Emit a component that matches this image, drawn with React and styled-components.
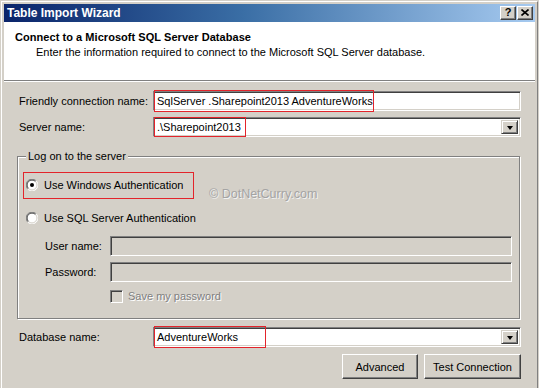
import React from 'react'
import styled, { createGlobalStyle } from 'styled-components'

const GlobalStyle = createGlobalStyle`
  html, body {
    margin: 0;
    padding: 0;
    background: #d4d0c8;
  }
  body {
    font-family: 'Liberation Sans', Arial, sans-serif;
    font-size: 11px;
    color: #000;
  }
  * {
    box-sizing: border-box;
  }
`

const Window = styled.div`
  width: 539px;
  height: 388px;
  overflow: hidden;
  background: #d4d0c8;
  border: 1px solid #d4d0c8;
  border-bottom: none;
`

const Frame = styled.div`
  height: 100%;
  display: flex;
  flex-direction: column;
  border-top: 1px solid #fff;
  border-left: 1px solid #fff;
  border-right: 1px solid #808080;
  padding: 2px 2px 0 2px;
`

const TitleBar = styled.div`
  height: 18px;
  flex: none;
  display: flex;
  align-items: center;
  justify-content: space-between;
  padding: 0 2px 0 3px;
  background: linear-gradient(to right, #0a246a 0%, #3a6ea5 45%, #a6caf0 100%);
`

const TitleText = styled.span`
  color: #fff;
  font-weight: bold;
  font-size: 12px;
  line-height: 14px;
`

const CaptionButtons = styled.div`
  display: flex;
  gap: 1px;
`

const CaptionButton = styled.div`
  width: 16px;
  height: 14px;
  display: flex;
  align-items: center;
  justify-content: center;
  background: #d4d0c8;
  border: 1px solid;
  border-color: #fff #404040 #404040 #fff;
  box-shadow: inset -1px -1px #808080;
  font-weight: bold;
  font-size: 11px;
  line-height: 11px;
  padding-bottom: 1px;
`

const Header = styled.div`
  height: 59px;
  flex: none;
  background: #fff;
  border-bottom: 1px solid #808080;
  box-shadow: 0 1px 0 #fff;
  padding: 9px 0 0 11px;
`

const HeaderTitle = styled.div`
  font-weight: bold;
  font-size: 11px;
  line-height: 13px;
  letter-spacing: 0.05px;
`

const HeaderSub = styled.div`
  margin-top: 2px;
  padding-left: 21px;
  line-height: 13px;
`

const Body = styled.div`
  flex: 1;
  display: flex;
  flex-direction: column;
  padding: 10px 14px 0 13px;
`

const FieldRow = styled.div`
  display: grid;
  grid-template-columns: ${({ $label }) => $label}px 1fr;
  align-items: center;
  margin-top: ${({ $top }) => $top || 0}px;
  padding-left: ${({ $indent }) => $indent || 2}px;
  padding-right: ${({ $right }) => $right || 0}px;
`

const Label = styled.span`
  line-height: 13px;
  white-space: nowrap;
`

const Field = styled.div`
  position: relative;
`

const sunken = `
  border: 1px solid;
  border-color: #808080 #fff #fff #808080;
  box-shadow: inset 1px 1px #404040, inset -1px -1px #d4d0c8;
`

const TextBox = styled.div`
  height: 20px;
  display: flex;
  align-items: center;
  padding: 0 3px;
  background: ${({ $disabled }) => ($disabled ? '#d4d0c8' : '#fff')};
  ${sunken}
  white-space: nowrap;
  overflow: hidden;
`

const Combo = styled.div`
  height: 20px;
  display: flex;
  align-items: stretch;
  padding: 2px;
  background: #fff;
  ${sunken}
`

const ComboText = styled.div`
  flex: 1;
  display: flex;
  align-items: center;
  padding-left: 1px;
  white-space: nowrap;
`

const DropButton = styled.div`
  width: 17px;
  display: flex;
  align-items: center;
  justify-content: center;
  background: #d4d0c8;
  border: 1px solid;
  border-color: #d4d0c8 #404040 #404040 #d4d0c8;
  box-shadow: inset 1px 1px #fff, inset -1px -1px #808080;
`

const Arrow = styled.span`
  width: 0;
  height: 0;
  border-left: 3.5px solid transparent;
  border-right: 3.5px solid transparent;
  border-top: 4px solid #000;
  margin-top: 1px;
`

const Mark = styled.div`
  position: absolute;
  left: ${({ $x }) => $x}px;
  top: ${({ $y }) => $y}px;
  width: ${({ $w }) => $w}px;
  height: ${({ $h }) => $h}px;
  border: 1px solid #e3242b;
  pointer-events: none;
`

const GroupBox = styled.div`
  position: relative;
  display: flex;
  flex-direction: column;
  margin: 19px 1px 0 0;
  border: 1px solid #808080;
  box-shadow: inset 1px 1px #fff, 1px 1px #fff;
  padding-bottom: 15px;
`

const Legend = styled.div`
  align-self: flex-start;
  margin: -7px 0 0 8px;
  padding: 0 2px;
  background: #d4d0c8;
  line-height: 13px;
`

const RadioRow = styled.div`
  position: relative;
  display: flex;
  align-items: center;
  gap: 6px;
  height: 13px;
  margin-top: ${({ $top }) => $top}px;
  padding-left: 8px;
`

const CheckRow = styled.div`
  display: flex;
  align-items: center;
  gap: 5px;
  height: 13px;
  margin-top: 8px;
  padding-left: 92px;
`

const CheckBox = styled.div`
  width: 13px;
  height: 13px;
  background: #d4d0c8;
  ${sunken}
`

const DisabledText = styled.span`
  color: #808080;
  text-shadow: 1px 1px 0 #fff;
  line-height: 13px;
`

const Watermark = styled.div`
  position: absolute;
  left: 191px;
  top: 30px;
  font-size: 12.5px;
  line-height: 14px;
  color: #a4a4a4;
  text-shadow: 1px 1px 0 #f2f2f2;
  white-space: nowrap;
`

const ButtonRow = styled.div`
  display: flex;
  justify-content: flex-end;
  gap: 6px;
  margin-top: 7px;
`

const Button = styled.button`
  width: ${({ $w }) => $w}px;
  height: 25px;
  padding: 0;
  font-family: inherit;
  font-size: 11px;
  color: #000;
  background: #d4d0c8;
  border: 1px solid;
  border-color: #fff #404040 #404040 #fff;
  box-shadow: inset -1px -1px #808080;
`

const Radio = ({ checked }) => (
  <svg width='12' height='12' viewBox='0 0 12 12'>
    <circle cx='6' cy='6' r='5.5' fill='#fff' />
    <path d='M1.8 10.2 A5.5 5.5 0 0 1 10.2 1.8' fill='none' stroke='#808080' />
    <path d='M10.2 1.8 A5.5 5.5 0 0 1 1.8 10.2' fill='none' stroke='#fff' />
    <path d='M2.5 9.5 A4.5 4.5 0 0 1 9.5 2.5' fill='none' stroke='#404040' />
    <path d='M9.5 2.5 A4.5 4.5 0 0 1 2.5 9.5' fill='none' stroke='#d4d0c8' />
    {checked && <circle cx='6' cy='6' r='2' fill='#000' />}
  </svg>
)

const CloseGlyph = () => (
  <svg width='8' height='7' viewBox='0 0 8 7'>
    <path d='M0.5 0.5 L7.5 6.5 M7.5 0.5 L0.5 6.5' stroke='#000' strokeWidth='1.6' />
  </svg>
)

const ComboBox = ({ value, children }) => (
  <Field>
    <Combo>
      <ComboText>{value}</ComboText>
      <DropButton>
        <Arrow />
      </DropButton>
    </Combo>
    {children}
  </Field>
)

const App = () => (
  <>
    <GlobalStyle />
    <Window>
      <Frame>
        <TitleBar>
          <TitleText>Table Import Wizard</TitleText>
          <CaptionButtons>
            <CaptionButton>?</CaptionButton>
            <CaptionButton>
              <CloseGlyph />
            </CaptionButton>
          </CaptionButtons>
        </TitleBar>

        <Header>
          <HeaderTitle>Connect to a Microsoft SQL Server Database</HeaderTitle>
          <HeaderSub>
            Enter the information required to connect to the Microsoft SQL Server database.
          </HeaderSub>
        </Header>

        <Body>
          <FieldRow $label={134}>
            <Label>Friendly connection name:</Label>
            <Field>
              <TextBox>SqlServer .Sharepoint2013 AdventureWorks</TextBox>
              <Mark $x={1} $y={-1} $w={220} $h={22} />
            </Field>
          </FieldRow>

          <FieldRow $label={134} $top={6}>
            <Label>Server name:</Label>
            <ComboBox value='.\Sharepoint2013'>
              <Mark $x={1} $y={0} $w={92} $h={20} />
            </ComboBox>
          </FieldRow>

          <GroupBox>
            <Legend>Log on to the server</Legend>
            <Watermark>© DotNetCurry.com</Watermark>
            <RadioRow $top={15}>
              <Radio checked />
              <span>Use Windows Authentication</span>
              <Mark $x={5} $y={-6} $w={171} $h={27} />
            </RadioRow>
            <RadioRow $top={20}>
              <Radio />
              <span>Use SQL Server Authentication</span>
            </RadioRow>
            <FieldRow $label={65} $top={12} $indent={27} $right={7}>
              <Label>User name:</Label>
              <TextBox $disabled />
            </FieldRow>
            <FieldRow $label={65} $top={6} $indent={27} $right={7}>
              <Label>Password:</Label>
              <TextBox $disabled />
            </FieldRow>
            <CheckRow>
              <CheckBox />
              <DisabledText>Save my password</DisabledText>
            </CheckRow>
          </GroupBox>

          <FieldRow $label={134} $top={8}>
            <Label>Database name:</Label>
            <ComboBox value='AdventureWorks'>
              <Mark $x={1} $y={-1} $w={112} $h={22} />
            </ComboBox>
          </FieldRow>

          <ButtonRow>
            <Button $w={76}>Advanced</Button>
            <Button $w={97}>Test Connection</Button>
          </ButtonRow>
        </Body>
      </Frame>
    </Window>
  </>
)

export default App
